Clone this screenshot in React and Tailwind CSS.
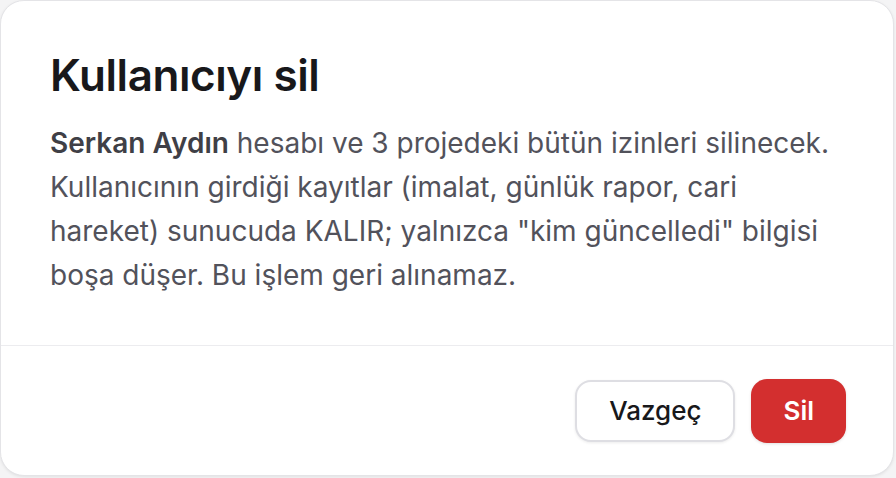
import React from 'react';

export default function App() {
  return (
    <div className="w-[896px] h-[478px] bg-[#f4f4f5] font-['Inter',sans-serif]">
      <div className="w-[894px] h-[476px] bg-white border border-[#e4e4e7] rounded-[24px] shadow-[0_1px_3px_rgba(0,0,0,0.08)] flex flex-col overflow-hidden">
        {/* Body */}
        <div className="px-[49px] pt-[48px] pb-[48px] border-b border-[#ececef]">
          <h1 className="text-[44px] leading-[52px] font-semibold text-[#18181b] tracking-[-0.01em]">
            Kullanıcıyı sil
          </h1>
          <p className="mt-[20px] text-[28px] leading-[44px] text-[#52525b]">
            <strong className="font-semibold text-[#3f3f46]">Serkan Aydın</strong> hesabı ve 3 projedeki bütün izinleri silinecek.
            Kullanıcının girdiği kayıtlar (imalat, günlük rapor, cari hareket) sunucuda KALIR; yalnızca "kim güncelledi" bilgisi
            boşa düşer. Bu işlem geri alınamaz.
          </p>
        </div>

        {/* Footer */}
        <div className="flex-1 flex items-center justify-end gap-[16px] px-[47px]">
          <button className="h-[62px] px-[32px] rounded-[16px] border-2 border-[#dedee3] bg-white text-[26px] font-medium text-[#18181b] shadow-[0_1px_3px_rgba(0,0,0,0.08)]">
            Vazgeç
          </button>
          <button className="h-[64px] px-[32px] rounded-[16px] bg-[#d32f2f] text-[26px] font-semibold text-white shadow-[0_1px_3px_rgba(0,0,0,0.12)]">
            Sil
          </button>
        </div>
      </div>
    </div>
  );
}
